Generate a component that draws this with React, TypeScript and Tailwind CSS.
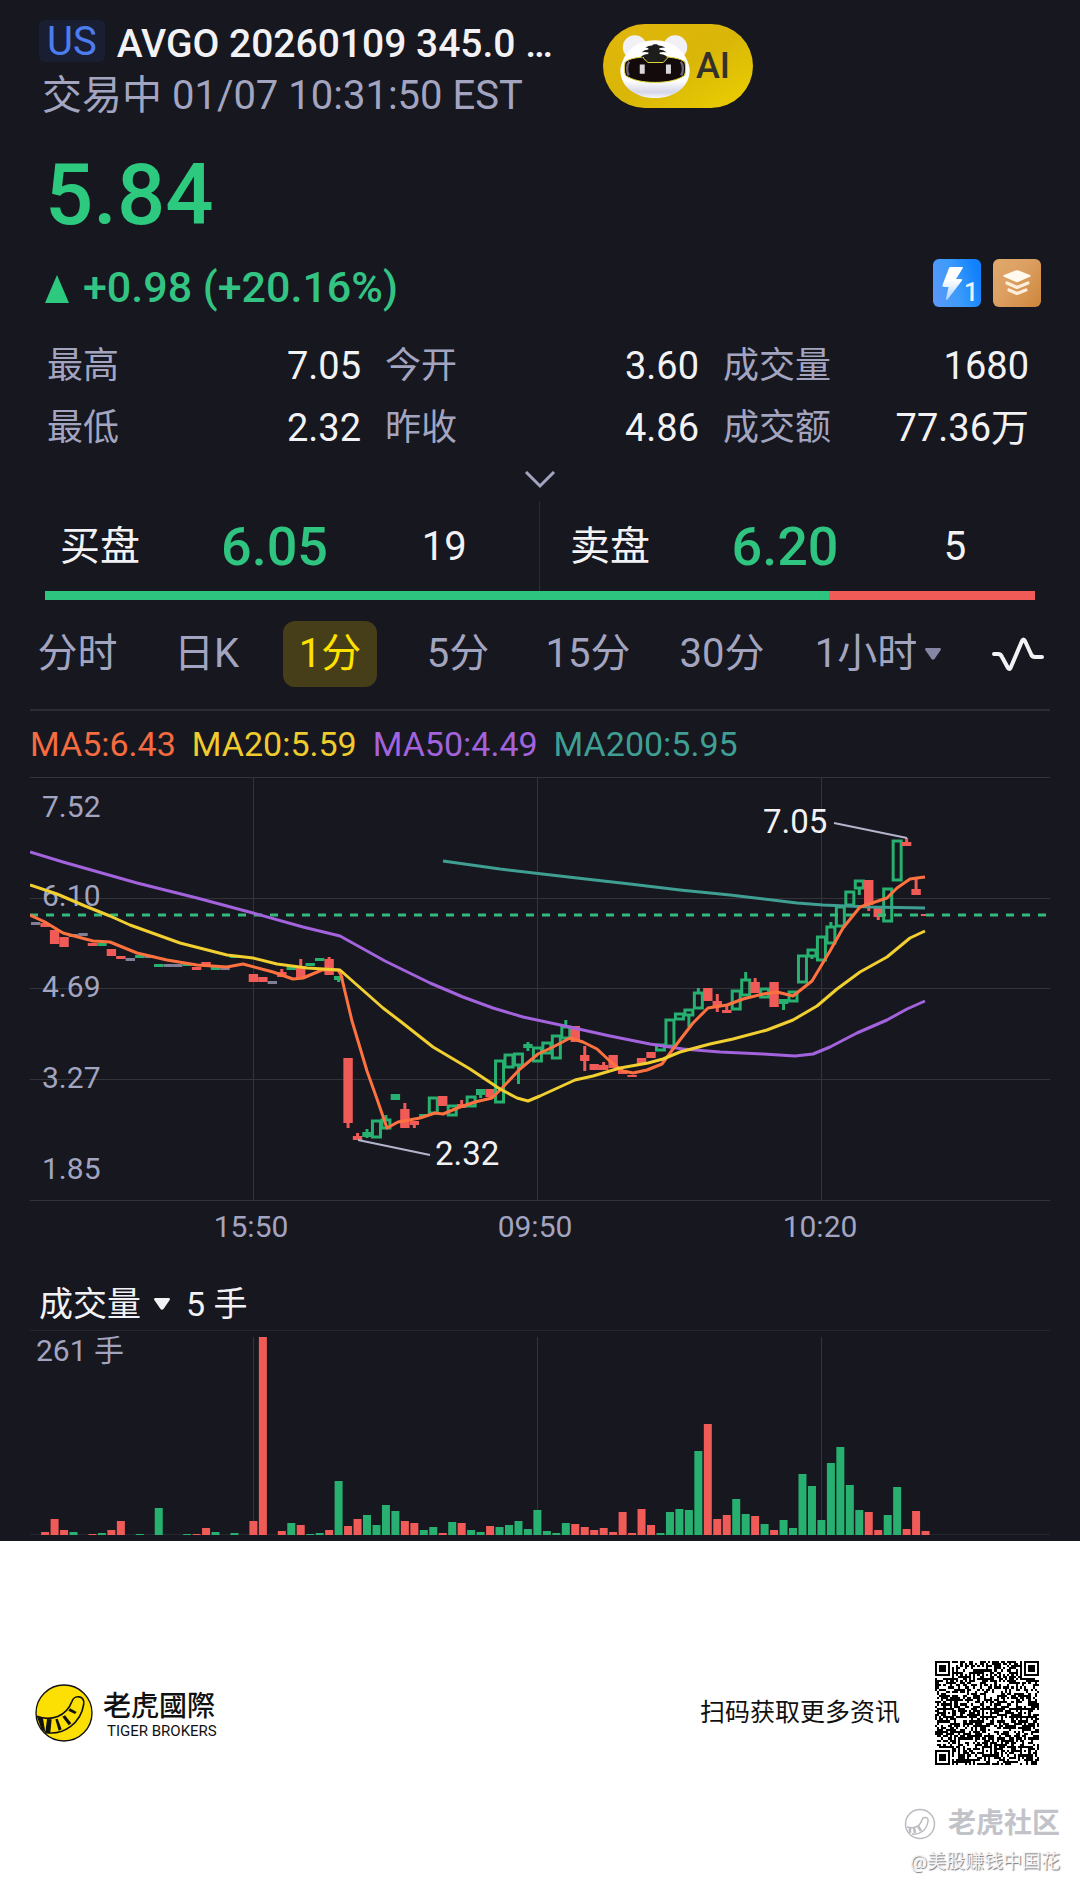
import { useState } from 'react';

type Tone = 'up' | 'down' | 'flat';

// slot, tone, body top, body bottom, high, low (hollow bodies are drawn for tall 'up' candles)
type Candle = [number, Tone, number, number, number?, number?];

const UP = '#27b070';
const DOWN = '#f05b58';
const FLAT = '#7f8098';

const SLOT = 9.467;
const ORIGIN = 253.4;
const slotX = (slot: number) => ORIGIN + slot * SLOT;

const candles: Candle[] = [
  [-23, 'flat', 921, 924], [-22, 'down', 922, 926], [-21, 'down', 929, 943], [-20, 'down', 936, 946],
  [-19, 'flat', 933, 936], [-18, 'flat', 932, 935], [-17, 'down', 942, 945], [-16, 'up', 942, 945],
  [-15, 'down', 948, 955], [-14, 'down', 955, 958], [-13, 'flat', 957, 960], [-12, 'up', 954, 957],
  [-11, 'flat', 954, 957], [-10, 'up', 963, 966], [-9, 'flat', 963, 966], [-8, 'flat', 963, 966],
  [-7, 'up', 963, 965], [-6, 'down', 966, 969], [-5, 'down', 961, 965], [-4, 'up', 966, 969],
  [-3, 'flat', 966, 969], [-2, 'up', 955, 957], [-1, 'flat', 955, 957], [0, 'down', 973, 981],
  [1, 'down', 976, 981], [2, 'flat', 980, 983], [3, 'down', 971, 976, 968], [4, 'up', 966, 969],
  [5, 'down', 965, 977, 958], [6, 'up', 962, 965], [7, 'up', 957, 960], [8, 'down', 958, 974, 956],
  [9, 'up', 975, 979, 975, 981], [10, 'down', 1057, 1122, 1057, 1127], [11, 'down', 1135, 1139, 1132],
  [12, 'up', 1131, 1136, 1128, 1137], [13, 'up', 1119, 1137], [14, 'up', 1118, 1128, 1114],
  [15, 'up', 1093, 1099], [16, 'down', 1108, 1127, 1102], [17, 'down', 1120, 1124, 1120, 1127],
  [18, 'up', 1113, 1116], [19, 'up', 1096, 1113], [20, 'down', 1095, 1105], [21, 'up', 1104, 1115],
  [22, 'down', 1103, 1107, 1099], [23, 'up', 1095, 1106], [24, 'up', 1088, 1094, 1088, 1097],
  [25, 'down', 1088, 1096], [26, 'up', 1059, 1102], [27, 'up', 1053, 1067], [28, 'up', 1052, 1065, 1052, 1083],
  [29, 'up', 1043, 1047, 1041, 1050], [30, 'up', 1046, 1061], [31, 'up', 1041, 1053], [32, 'up', 1034, 1058],
  [33, 'up', 1025, 1038, 1019], [34, 'down', 1025, 1041], [35, 'down', 1054, 1060, 1045, 1070],
  [36, 'down', 1063, 1069], [37, 'down', 1064, 1069, 1061], [38, 'down', 1054, 1067], [39, 'down', 1069, 1073],
  [40, 'down', 1074, 1076], [41, 'down', 1057, 1063], [42, 'down', 1051, 1057], [43, 'up', 1043, 1050],
  [44, 'up', 1018, 1046], [45, 'up', 1012, 1019], [46, 'up', 1008, 1015, 1008, 1026], [47, 'up', 991, 1008, 987],
  [48, 'down', 987, 1000], [49, 'down', 1000, 1005, 993, 1011], [50, 'down', 1009, 1012, 1004],
  [51, 'up', 989, 1009], [52, 'up', 978, 995, 971], [53, 'down', 981, 992, 977], [54, 'up', 987, 997],
  [55, 'down', 981, 1006], [56, 'up', 998, 1003, 998, 1009], [57, 'up', 990, 1001], [58, 'up', 954, 982],
  [59, 'up', 948, 956, 948, 958], [60, 'up', 935, 960], [61, 'up', 925, 943, 921], [62, 'up', 905, 926],
  [63, 'up', 890, 905], [64, 'up', 879, 888, 879, 894], [65, 'down', 879, 904, 879, 910],
  [66, 'down', 907, 916, 907, 919], [67, 'up', 887, 921], [68, 'up', 839, 880], [69, 'down', 841, 845, 837],
  [70, 'down', 888, 894, 878], [71, 'down', 913, 915],
];

const volumes: [number, Tone, number][] = [
  [-22, 'down', 3], [-21, 'down', 16], [-20, 'down', 5], [-19, 'up', 3], [-17, 'down', 1], [-16, 'up', 2],
  [-15, 'down', 5], [-14, 'down', 14], [-12, 'up', 1], [-10, 'up', 27], [-7, 'up', 1], [-6, 'down', 1],
  [-5, 'down', 7], [-4, 'up', 3], [-2, 'up', 2], [0, 'down', 14], [1, 'down', 198], [3, 'down', 4],
  [4, 'up', 12], [5, 'down', 10], [6, 'up', 1], [7, 'up', 2], [8, 'down', 5], [9, 'up', 54], [10, 'down', 9],
  [11, 'down', 16], [12, 'up', 20], [13, 'up', 10], [14, 'up', 30], [15, 'up', 24], [16, 'down', 14],
  [17, 'down', 12], [18, 'up', 5], [19, 'up', 8], [20, 'down', 2], [21, 'up', 13], [22, 'down', 12],
  [23, 'up', 5], [24, 'up', 3], [25, 'down', 9], [26, 'up', 8], [27, 'up', 10], [28, 'up', 14], [29, 'up', 6],
  [30, 'up', 25], [31, 'up', 4], [32, 'up', 2], [33, 'up', 12], [34, 'down', 11], [35, 'down', 8],
  [36, 'down', 5], [37, 'down', 7], [38, 'down', 3], [39, 'down', 23], [40, 'down', 2], [41, 'down', 26],
  [42, 'down', 10], [43, 'up', 2], [44, 'up', 23], [45, 'up', 26], [46, 'up', 25], [47, 'up', 84],
  [48, 'down', 111], [49, 'down', 16], [50, 'down', 20], [51, 'up', 36], [52, 'up', 21], [53, 'down', 19],
  [54, 'up', 11], [55, 'down', 5], [56, 'up', 15], [57, 'up', 7], [58, 'up', 61], [59, 'up', 49],
  [60, 'up', 15], [61, 'up', 72], [62, 'up', 88], [63, 'up', 50], [64, 'up', 25], [65, 'down', 23],
  [66, 'down', 5], [67, 'up', 20], [68, 'up', 48], [69, 'down', 6], [70, 'down', 24], [71, 'down', 4],
];

const averages = [
  {
    color: '#3f9f93',
    points: '443,860 500,868 577,877 630,883 680,889 730,894 797,902 823,904 870,906 925,907',
  },
  {
    color: '#a263dd',
    points:
      '30,851 63,861 137,882 197,897 253,912 303,926 340,935 385,960 430,982 463,996 493,1007 523,1016 565,1025 610,1035 650,1043 683,1048 720,1051 763,1053 795,1055 813,1053 830,1046 857,1032 887,1019 907,1008 925,1000',
  },
  {
    color: '#ff7240',
    points:
      '30,914 45,921 63,932 93,940 110,941 137,952 167,959 197,964 227,966 243,963 273,971 293,978 303,977 322,969 338,969 341,974 352,1020 367,1070 377,1098 387,1127 398,1121 420,1117 435,1112 443,1113 460,1106 475,1101 492,1097 503,1086 520,1068 538,1053 553,1046 570,1037 583,1041 597,1048 613,1063 623,1070 633,1072 647,1069 662,1063 673,1048 693,1022 708,1007 727,1004 743,998 763,993 777,991 793,995 812,980 830,950 843,927 860,906 887,897 897,887 910,878 917,877 925,876',
  },
  {
    color: '#f2cf30',
    points:
      '30,884 57,893 85,905 110,915 130,924 180,942 227,954 253,957 277,963 307,967 340,969 383,1007 400,1020 433,1046 470,1068 500,1088 517,1097 528,1100 540,1095 575,1079 593,1075 620,1067 648,1062 663,1058 680,1051 710,1043 733,1038 767,1029 793,1019 817,1005 837,988 860,971 887,956 910,937 925,930',
  },
];

const stats = [
  ['最高', '7.05'],
  ['今开', '3.60'],
  ['成交量', '1680'],
  ['最低', '2.32'],
  ['昨收', '4.86'],
  ['成交额', '77.36万'],
];

const periods = ['分时', '日K', '1分', '5分', '15分', '30分'];

function TigerHead() {
  return (
    <svg viewBox="0 0 210 190" className="h-[63px] w-[70px]" aria-hidden="true">
      <defs>
        <linearGradient id="head" x1="0" y1="0" x2="0" y2="1">
          <stop offset="0.7" stopColor="#ffffff" />
          <stop offset="0.9" stopColor="#d5d6e6" />
          <stop offset="1" stopColor="#f6f6fb" />
        </linearGradient>
      </defs>
      <circle cx="44" cy="37" r="36" fill="#f1f1f5" />
      <circle cx="166" cy="37" r="36" fill="#f1f1f5" />
      <path d="M105 16C160 16 200 50 209 100c5 50-40 90-104 90S-4 150 1 100C10 50 50 16 105 16z" fill="url(#head)" />
      <path d="M15 82C26 70 60 65 105 65s79 5 90 17c4 14 3 28-1 40-20 14-52 21-89 21s-69-7-89-21c-4-12-5-26-1-40z" fill="#120a0b" stroke="#e5dc3c" strokeWidth="3" />
      <path d="M27 80c-8 12-8 30-1 42M183 80c8 12 8 30 1 42" fill="none" stroke="#6b6478" strokeWidth="7" />
      <path d="M70 64h72v6l-12 13H84L70 70z" fill="#1d1d1b" stroke="#e5dc3c" strokeWidth="3" />
      <path d="M76 38q10-6 20-6l5-4h10l5 4q10 0 20 6-10 0-18 2v4q12 0 22 8-13-2-21 1v4q14 0 23 10-15-2-23 3l-10 11H94L85 70q-8-5-23-3 9-10 23-10v-4q-8-3-20-1 9-8 20-8v-4q-4-2-9-2z" fill="#1d1d1b" />
      <path d="M59 89h15v28H59zM138 89h15v28h-15z" fill="#d9d9dc" />
    </svg>
  );
}

function FlashBadge() {
  return (
    <svg viewBox="0 0 48 48" className="size-12" aria-hidden="true">
      <defs>
        <linearGradient id="flash" x1="0" y1="0.8" x2="1" y2="0.5">
          <stop offset="0" stopColor="#5b98fa" />
          <stop offset="0.5" stopColor="#3b9bfa" />
          <stop offset="1" stopColor="#1180fb" />
        </linearGradient>
        <linearGradient id="bolt" x1="0" y1="0" x2="0" y2="1">
          <stop offset="0.4" stopColor="#ffffff" />
          <stop offset="1" stopColor="#a9d2ff" />
        </linearGradient>
      </defs>
      <rect width="48" height="48" rx="6" fill="url(#flash)" />
      <path d="M16 9q.6-1 2-1h11q1.500 0 .7 1.300L23 20h5q2 0 .8 1.700L14.500 40.500q-1.600 1.200-1.500-1L15.500 28H11q-2 0-1.600-1.800z" fill="url(#bolt)" />
      <text x="31" y="42" fontFamily="Roboto, sans-serif" fontSize="25" fontWeight="500" fill="#e8f4ff">1</text>
    </svg>
  );
}

function DepthBadge() {
  return (
    <svg viewBox="0 0 48 48" className="size-12" aria-hidden="true">
      <defs>
        <linearGradient id="depth" x1="0" y1="0" x2="1" y2="0.8">
          <stop offset="0" stopColor="#e0a96c" />
          <stop offset="0.5" stopColor="#dc9f62" />
          <stop offset="1" stopColor="#cf8a40" />
        </linearGradient>
      </defs>
      <rect width="48" height="48" rx="6" fill="url(#depth)" />
      <path d="M22.500 11.500q1.500-.7 3 0L37 16q1.500.8 0 1.800l-11.500 5q-1.500.7-3 0L11 17.800q-1.500-1 0-1.800z" fill="#fff9ee" />
      <path d="M14 24l10 4.500L35 24M16 31l8 3.500 9-3.500" fill="none" stroke="#fdeedb" strokeWidth="3.200" strokeLinecap="round" strokeLinejoin="round" />
    </svg>
  );
}

function CandleShape({ candle }: { candle: Candle }) {
  const [slot, tone, top, bottom, high = top, low = bottom] = candle;
  const x = slotX(slot);
  const color = tone === 'up' ? UP : tone === 'down' ? DOWN : FLAT;
  const hollow = tone === 'up' && bottom - top > 6;
  return (
    <g fill={color}>
      {high < top && <rect x={x - 1.5} y={high} width="3" height={top - high} />}
      {low > bottom && <rect x={x - 1.5} y={bottom} width="3" height={low - bottom} />}
      {hollow ? (
        <rect x={x - 4} y={top + 1} width="8" height={bottom - top - 2} fill="none" stroke={color} strokeWidth="3" />
      ) : (
        <rect x={x - 4.7} y={top} width="9.4" height={bottom - top} />
      )}
    </g>
  );
}

function PriceChart() {
  return (
    <svg viewBox="30 776 1020 501" className="block h-auto w-full" role="img" aria-label="1分 K线" fontFamily="Roboto, sans-serif">
      <path d="M30 776.5H1050M30 897.5H1050M30 987.5H1050M30 1078.5H1050M30 1199.5H1050M253.5 776V1199M537.5 776V1199M821.5 776V1199" stroke="#33343a" />
      <g fill="#a3a5c0" fontSize="30">
        <text x="42" y="816">7.52</text>
        <text x="42" y="905">6.10</text>
        <text x="42" y="996">4.69</text>
        <text x="42" y="1087">3.27</text>
        <text x="42" y="1178">1.85</text>
        <g textAnchor="middle">
          <text x="251" y="1236">15:50</text>
          <text x="535" y="1236">09:50</text>
          <text x="820" y="1236">10:20</text>
        </g>
      </g>
      {candles.map((c) => (
        <CandleShape key={c[0]} candle={c} />
      ))}
      <path d="M30 914H1046" stroke="#35b87a" strokeWidth="3" strokeDasharray="8 8" />
      {averages.map((a) => (
        <polyline key={a.color} points={a.points} fill="none" stroke={a.color} strokeWidth="3" strokeLinejoin="round" />
      ))}
      <path d="M834 822L907 837M358 1139L430 1154" stroke="#b4b5cc" strokeWidth="2" />
      <g fill="#f2f2f5" fontSize="33">
        <text x="763" y="832">7.05</text>
        <text x="435" y="1164">2.32</text>
      </g>
    </svg>
  );
}

function VolumeChart() {
  return (
    <svg viewBox="30 1329 1020 211" className="block h-auto w-full" role="img" aria-label="成交量" fontFamily="Roboto, 'Noto Sans CJK SC', sans-serif">
      <path d="M30 1329.5H1050M30 1533.5H1050" stroke="#26272e" />
      <path d="M253.5 1336V1534M537.5 1336V1534M821.5 1336V1534" stroke="#33343a" />
      <text x="36" y="1360" fontSize="30" fill="#a3a5c0">261 手</text>
      {volumes.map(([slot, tone, h]) => (
        <rect key={slot} x={slotX(slot) - 4} y={1534 - h} width="8" height={h} fill={tone === 'up' ? UP : DOWN} />
      ))}
    </svg>
  );
}

function BrandMark() {
  return (
    <svg viewBox="46 70 174 174" className="size-[58px]" aria-hidden="true">
      <circle cx="133" cy="157" r="84" fill="#fcdf03" stroke="#111" strokeWidth="4" />
      <path d="M51 167C95 182 140 168 157 122C163 102 197 103 192 131C184 186 132 226 76 215" fill="none" stroke="#111" strokeWidth="5" />
      <path d="M52 168l18 5 7 42-12-10zM82 175l14 1-4 39-15-1zM107 176l7-2 12 32-9 4zM128 168l8-4 19 24-8 6zM146 150l5-7 20 11-5 6z" fill="#111" />
    </svg>
  );
}

const QR_SIZE = 49;
const QR_ALIGN = [6, 24, 42];

function qrModule(x: number, y: number) {
  const last = QR_SIZE - 1;
  const finders = [[0, 0], [last - 6, 0], [0, last - 6]];
  for (const [fx, fy] of finders) {
    const d = Math.max(Math.abs(x - fx - 3), Math.abs(y - fy - 3));
    if (d <= 4) return d !== 4 && d !== 2;
  }
  for (const ax of QR_ALIGN) {
    for (const ay of QR_ALIGN) {
      const d = Math.max(Math.abs(x - ax), Math.abs(y - ay));
      if (d <= 2) return d !== 1;
    }
  }
  if (x === 6 || y === 6) return (x + y) % 2 === 0;
  const n = Math.sin(x * 127.1 + y * 311.7) * 43758.5453;
  return n - Math.floor(n) < 0.53;
}

function QrCode() {
  let d = '';
  for (let y = 0; y < QR_SIZE; y++) {
    for (let x = 0; x < QR_SIZE; x++) {
      if (qrModule(x, y)) d += `M${x} ${y}h1v1h-1z`;
    }
  }
  return (
    <svg viewBox="0 0 49 49" className="size-[104px]" role="img" aria-label="QR" shapeRendering="crispEdges">
      <path d={d} fill="#000" />
    </svg>
  );
}

function OrderSide({ label, price, size }: { label: string; price: string; size: string }) {
  return (
    <div className="grid grid-cols-[16fr_17fr_17fr] items-center pt-[2px] pr-[10px]">
      <span className="pl-[30px] text-[40px] leading-[48px]">{label}</span>
      <span className="text-center text-[54px] leading-[60px] font-medium text-[#2fc47f]">{price}</span>
      <span className="text-center text-[40px] leading-[48px]">{size}</span>
    </div>
  );
}

export default function App() {
  const [period, setPeriod] = useState('1分');

  return (
    <div className="bg-white font-[Roboto,'Noto_Sans_CJK_SC',sans-serif]">
      <main className="bg-[#16171f] text-[#f2f2f5]">
        <header className="grid grid-cols-[564fr_477fr] items-start pt-5 pl-[39px]">
          <div>
            <div className="flex items-start gap-3">
              <span className="h-[42px] rounded-md bg-[#1a1e33] px-2 text-[40px] leading-[44px] text-[#4c7df0]">US</span>
              <h1 className="text-[39px] leading-[48px] font-medium whitespace-nowrap">AVGO 20260109 345.0 …</h1>
            </div>
            <p className="mt-1 pl-[3px] text-[40px] leading-[48px] text-[#a3a5c0]">交易中 01/07 10:31:50 EST</p>
          </div>
          <button className="mt-1 flex h-[84px] w-[150px] items-center gap-[6px] rounded-full bg-linear-to-br from-[#e2b60c] via-[#d9b608] to-[#ecd000] pl-[17px] text-[36px] font-medium text-[#33312a]">
            <TigerHead />
            AI
          </button>
        </header>

        <section className="px-[45px]">
          <p className="mt-[27px] text-[85px] leading-[96px] font-medium text-[#2dc97f]">5.84</p>
          <div className="-mr-[6px] mt-4 flex items-start justify-between">
            <p className="flex items-center gap-[14px] text-[43px] leading-[56px] font-medium text-[#33c483]">
              <svg viewBox="0 0 24 28" className="mt-1 h-7 w-6" aria-hidden="true">
                <path d="M12 0L24 28H0z" fill="#2dc97f" />
              </svg>
              +0.98 (+20.16%)
            </p>
            <div className="flex gap-3">
              <FlashBadge />
              <DepthBadge />
            </div>
          </div>
        </section>

        <dl className="mt-5 grid grid-cols-[314fr_314fr_306fr] gap-x-6 pr-[51px] pl-[47px] leading-[62px]">
          {stats.map(([label, value]) => (
            <div key={label} className="flex justify-between">
              <dt className="text-[36px] text-[#a3a5c0]">{label}</dt>
              <dd className="text-[38px]">{value}</dd>
            </div>
          ))}
        </dl>

        <button className="flex h-[42px] w-full items-center justify-center" aria-label="展开">
          <svg viewBox="0 0 32 18" className="h-[18px] w-8" fill="none" aria-hidden="true">
            <path d="M2 1L16 15L30 1" stroke="#a3a5c0" strokeWidth="3" />
          </svg>
        </button>

        <section className="grid h-[90px] grid-cols-2 divide-x divide-[#2a2b33] px-[30px]">
          <OrderSide label="买盘" price="6.05" size="19" />
          <OrderSide label="卖盘" price="6.20" size="5" />
        </section>
        <div className="mx-[45px] flex h-[9px]">
          <div className="grow-[19] bg-[#2cc47f]" />
          <div className="grow-[5] bg-[#f05b58]" />
        </div>

        <nav className="mt-[21px] grid grid-cols-[129fr_129fr_118fr_138fr_122fr_146fr_166fr_114fr] items-center justify-items-center pr-[5px] pl-[13px] text-[40px] leading-[66px] text-[#a3a5c0]">
          {periods.map((p) => (
            <button
              key={p}
              onClick={() => setPeriod(p)}
              className={p === period ? 'rounded-xl bg-[#453e18] px-4 text-[#ffe100]' : ''}
            >
              {p}
            </button>
          ))}
          <button className="flex items-center gap-2" onClick={() => setPeriod('1小时')}>
            1小时
            <svg viewBox="0 0 16 12" className="h-3 w-4" aria-hidden="true">
              <path d="M1 0h14q1.500.5.7 2L9.500 11q-1.500 1.500-3 0L.3 2Q-.5.5 1 0z" fill="#8486a3" />
            </svg>
          </button>
          <button aria-label="指标">
            <svg viewBox="0 0 54 36" className="h-9 w-[54px]" fill="none" aria-hidden="true">
              <path d="M3 18h4q3 0 4 3l6 11q1.500 2 2.500 0L31 5q1.500-3 3 0l6 13q1 3 4 3h7" stroke="#f2f2f5" strokeWidth="4" strokeLinecap="round" strokeLinejoin="round" />
            </svg>
          </button>
        </nav>

        <section className="mx-[30px] mt-[22px] border-t-2 border-[#2c2d34]">
          <div className="flex gap-4 text-[34px] leading-[66px]">
            <span className="text-[#f56c40]">MA5:6.43</span>
            <span className="text-[#efcb2e]">MA20:5.59</span>
            <span className="text-[#a263dd]">MA50:4.49</span>
            <span className="text-[#3f9f93]">MA200:5.95</span>
          </div>
          <PriceChart />
          <div className="flex items-center pl-[9px] text-[34px] leading-[52px]">
            <button className="flex items-center gap-[13px]">
              成交量
              <svg viewBox="0 0 16 12" className="h-3 w-4" aria-hidden="true">
                <path d="M1 0h14q1.500.5.7 2L9.500 11q-1.500 1.500-3 0L.3 2Q-.5.5 1 0z" fill="#f2f2f5" />
              </svg>
            </button>
            <span className="ml-4">5 手</span>
          </div>
          <VolumeChart />
        </section>
      </main>

      <footer className="text-[#111]">
        <div className="flex items-center justify-between pt-[120px] pr-[41px] pl-[35px]">
          <div className="flex items-center gap-[10px]">
            <BrandMark />
            <div>
              <p className="font-['Noto_Sans_CJK_TC',sans-serif] text-[28px] leading-[36px] font-medium">老虎國際</p>
              <p className="pl-1 text-[15px] leading-[18px]">TIGER BROKERS</p>
            </div>
          </div>
          <div className="flex items-center gap-[35px]">
            <p className="text-[25px] leading-[32px]">扫码获取更多资讯</p>
            <QrCode />
          </div>
        </div>
        <div className="mt-[39px] flex flex-col items-end pr-5 pb-[6px]">
          <p className="flex items-center gap-3 text-[28px] leading-[40px] font-bold text-[#c2c3c9]">
            <svg viewBox="0 0 32 32" className="size-8" fill="none" stroke="#bbbcc2" aria-hidden="true">
              <circle cx="16" cy="16" r="14.500" strokeWidth="1.500" />
              <path d="M3 19c8 2 13-1 15-7 1-4 7-3 6 1-1 9-8 14-16 13" strokeWidth="1.500" />
              <path d="M6 20v5M10 20l1 5M14 18l3 5" strokeWidth="2.500" />
            </svg>
            老虎社区
          </p>
          <p className="text-[19px] leading-[36px] text-[#f4f4f6] text-shadow-[1px_1px_1px_#77787d]">@美股赚钱中国花</p>
        </div>
      </footer>
    </div>
  );
}
